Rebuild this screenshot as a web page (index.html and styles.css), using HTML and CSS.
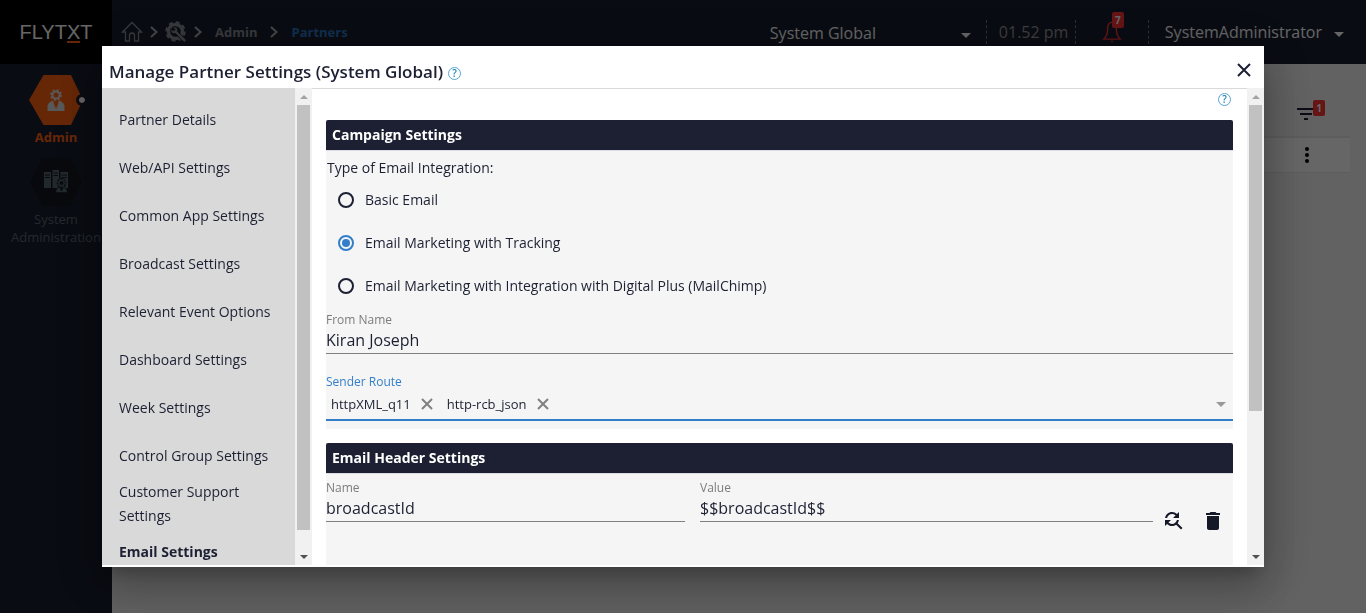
FILE: index.html
```html
<!DOCTYPE html>
<html lang="en">
<head>
<meta charset="utf-8">
<title>Manage Partner Settings</title>
<link rel="stylesheet" href="styles.css">
</head>
<body>
<div class="app">
  <header class="topbar">
    <a class="logo" href="#">FLYT<span class="logo-mark">X</span>T</a>
    <nav class="crumbs" aria-label="Breadcrumb">
      <a href="#" aria-label="Home"><svg class="home" viewBox="0 0 22 22"><path d="M4.500 11H1.500L11 1.500 20.500 11H17.500V20H13.500V14.500A2.500 2.500 0 0 0 8.500 14.500V20H4.500V11Z" fill="none" stroke="currentColor" stroke-width="1.300"/></svg></a>
      <svg class="chev" viewBox="0 0 8 12"><path d="M1 1 6.500 6 1 11" /></svg>
      <a href="#" aria-label="Settings"><svg class="cog" viewBox="0 0 22 22"><circle cx="10.500" cy="10.500" r="7" fill="none" stroke="currentColor" stroke-width="3.400"/><circle cx="10.500" cy="10.500" r="9.200" fill="none" stroke="currentColor" stroke-width="2" stroke-dasharray="4 3.225"/><path d="M7.500 6 10 8.500 8.500 10 6 7.500C5 11 7.500 13.500 10.500 12.500L17.500 20Q19.500 22 21 20.500 22 19 20 17.500L12.500 10.500C13.500 7.500 11 5 7.500 6Z" fill="currentColor" stroke="#191e30" stroke-width="1"/></svg></a>
      <svg class="chev" viewBox="0 0 8 12"><path d="M1 1 6.500 6 1 11" /></svg>
      <a class="crumb" href="#">Admin</a>
      <svg class="chev" viewBox="0 0 8 12"><path d="M1 1 6.500 6 1 11" /></svg>
      <a class="crumb current" href="#">Partners</a>
    </nav>
    <div class="tools">
      <button class="picker scope">System Global<span class="caret"></span></button>
      <time class="clock">01.52 pm</time>
      <button class="alerts" aria-label="Notifications"><svg viewBox="0 0 18 20"><path d="M9 1C5 1.500 5 5 5 8 5 12 3.500 14.500 1.500 16.500H16.500C14.500 14.500 13 12 13 8 13 5 13 1.500 9 1Z" fill="none" stroke="currentColor" stroke-width="1.300"/><path d="M7.500 18H10.500L9 19.500Z" fill="currentColor"/></svg><span class="badge">7</span></button>
      <button class="picker user">SystemAdministrator<span class="caret"></span></button>
    </div>
  </header>
  <div class="workspace">
    <nav class="rail" aria-label="Modules">
      <a class="module active" href="#"><span class="hex"><svg viewBox="0 0 54 50"><path d="M14.500 0H42L54 25 42 50H14.500L0 25Z" fill="#ff6210"/><g fill="#ddd"><circle cx="27" cy="20" r="3.600" fill="none" stroke="#ddd" stroke-width="2"/><circle cx="27" cy="20" r="5" fill="none" stroke="#ddd" stroke-width="1.800" stroke-dasharray="2 1.930"/><path d="M18.500 36V31Q19 27 24 25.500L26.500 34 27 30 27.500 34 30 25.500Q35 27 35.500 31V36Z"/></g></svg></span>Admin</a>
      <a class="module" href="#"><span class="hex"><svg viewBox="0 0 54 50"><path d="M13 1H41L53 25 41 49H13L1 25Z" fill="#16181f"/><g fill="#546870"><path d="M15 15H22V31H15ZM23.500 13H30V31H23.500ZM31.500 15H39V31H31.500Z"/><path d="M16 18H21M16 20.500H21M24.500 16H29M24.500 18.500H29M32.500 18H38M32.500 20.500H38" stroke="#16181f"/><circle cx="32.500" cy="26" r="4.800" fill="#16181f"/><circle cx="32.500" cy="26" r="2.700" fill="none" stroke="#546870" stroke-width="1.200"/><circle cx="32.500" cy="26" r="3.800" fill="none" stroke="#546870" stroke-width="1.200" stroke-dasharray="1.500 1.480"/><path d="M27 35.500V33Q27.500 31 30.500 30L32.500 34 34.500 30Q37.500 31 38 33V35.500Z" stroke="#16181f" stroke-width=".6"/></g></svg></span>System Administration</a>
    </nav>
    <main class="page">
      <button class="filter" aria-label="Filters"><svg viewBox="0 0 18 12"><path d="M0 1H18M3 6H15M7 11H11" stroke="currentColor" stroke-width="2"/></svg><span class="badge">1</span></button>
      <div class="record"><button class="more" aria-label="More"><svg viewBox="0 0 4 16"><circle cx="2" cy="2" r="2"/><circle cx="2" cy="8" r="2"/><circle cx="2" cy="14" r="2"/></svg></button></div>
    </main>
  </div>
</div>
<div class="backdrop">
  <section class="dialog" role="dialog" aria-modal="true" aria-labelledby="dialog-title">
    <header class="dialog-head">
      <h1 id="dialog-title">Manage Partner Settings (System Global)</h1>
      <button class="help" aria-label="Help">?</button>
      <button class="close" aria-label="Close"><svg viewBox="0 0 14 14"><path d="M1 1 13 13M13 1 1 13" stroke="currentColor" stroke-width="2"/></svg></button>
    </header>
    <div class="dialog-body">
      <nav class="menu" aria-label="Partner settings">
        <a href="#">Partner Details</a>
        <a href="#">Web/API Settings</a>
        <a href="#">Common App Settings</a>
        <a href="#">Broadcast Settings</a>
        <a href="#">Relevant Event Options</a>
        <a href="#">Dashboard Settings</a>
        <a href="#">Week Settings</a>
        <a href="#">Control Group Settings</a>
        <a href="#">Customer Support Settings</a>
        <a href="#" class="selected">Email Settings</a>
      </nav>
      <div class="scrollbar menu-scroll" aria-hidden="true"><span class="arrow up"></span><span class="track"><span class="thumb"></span></span><span class="arrow down"></span></div>
      <form class="content">
        <div class="content-help"><button type="button" class="help" aria-label="Help">?</button></div>
        <section class="panel">
          <h2>Campaign Settings</h2>
          <fieldset class="options">
            <legend>Type of Email Integration:</legend>
            <label><input type="radio" name="integration">Basic Email</label>
            <label><input type="radio" name="integration" checked>Email Marketing with Tracking</label>
            <label><input type="radio" name="integration">Email Marketing with Integration with Digital Plus (MailChimp)</label>
          </fieldset>
          <div class="field sender">
            <label for="from-name">From Name</label>
            <input id="from-name" type="text" value="Kiran Joseph">
          </div>
          <div class="field route" role="group" aria-labelledby="route-label">
            <span class="label" id="route-label">Sender Route</span>
            <div class="chips">
              <span class="chip">httpXML_q11<button type="button" aria-label="Remove httpXML_q11"><svg viewBox="0 0 12 12"><path d="M1 1 11 11M11 1 1 11"/></svg></button></span>
              <span class="chip">http-rcb_json<button type="button" aria-label="Remove http-rcb_json"><svg viewBox="0 0 12 12"><path d="M1 1 11 11M11 1 1 11"/></svg></button></span>
              <button type="button" class="open" aria-label="Show routes"><span class="caret"></span></button>
            </div>
          </div>
        </section>
        <section class="panel headers">
          <h2>Email Header Settings</h2>
          <div class="header-row">
            <div class="field">
              <label for="header-name">Name</label>
              <input id="header-name" type="text" value="broadcastId">
            </div>
            <div class="field">
              <label for="header-value">Value</label>
              <input id="header-value" type="text" value="$$broadcastId$$">
            </div>
            <div class="actions">
              <button type="button" aria-label="Find and replace"><svg viewBox="2 3 20 20"><path d="M11 6c1.380 0 2.630.56 3.540 1.460L12 10h6V4l-2.050 2.050C14.680 4.780 12.930 4 11 4c-3.530 0-6.430 2.610-6.920 6H6.100c.46-2.280 2.480-4 4.900-4zm5.640 9.140c.66-.9 1.120-1.970 1.280-3.140H15.900c-.46 2.280-2.480 4-4.900 4-1.380 0-2.630-.56-3.540-1.460L10 12H4v6l2.050-2.050C7.320 17.220 9.070 18 11 18c1.550 0 2.980-.51 4.140-1.360L20 21.490 21.490 20l-4.850-4.860z"/></svg></button>
              <button type="button" aria-label="Delete"><svg viewBox="2 2 20 20"><path d="M6 19c0 1.100.9 2 2 2h8c1.100 0 2-.9 2-2V7H6v12zM19 4h-3.500l-1-1h-5l-1 1H5v2h14V4z"/></svg></button>
            </div>
          </div>
        </section>
      </form>
      <div class="scrollbar content-scroll" aria-hidden="true"><span class="arrow up"></span><span class="track"><span class="thumb"></span></span><span class="arrow down"></span></div>
    </div>
  </section>
</div>
</body>
</html>
```
FILE: styles.css
```css
* { box-sizing: border-box; }
body { margin: 0; font: 14px/24px "Open Sans", sans-serif; color: #1c2032; overflow: hidden; }
button, input { font: inherit; color: inherit; }
button { background: none; border: 0; padding: 0; }
a { color: inherit; text-decoration: none; }
svg { display: block; }

.app { min-height: 100vh; display: flex; flex-direction: column; }
.topbar { display: flex; height: 64px; background: #191e30; color: #fff; }
.logo { width: 112px; background: #000; text-align: center; font: 20px/64px "Liberation Sans", sans-serif; }
.logo-mark { display: inline-block; line-height: 18px; border-bottom: 2px solid #ff6210; }
.crumbs { display: flex; align-items: center; gap: 7px; padding-left: 9px; color: #8a8f98; font-size: 13px; font-weight: 700; }
.home { width: 22px; height: 22px; }
.cog { width: 22px; height: 22px; }
.chev { width: 8px; height: 12px; fill: none; stroke: #b0b0b0; stroke-width: 2; }
.crumb { margin: 0 6px; }
.crumb.current { color: #2a76c2; }
.tools { flex: 1; display: flex; justify-content: flex-end; align-items: center; font-size: 16px; }
.picker { display: flex; justify-content: space-between; align-items: center; }
.caret { border: 5px solid transparent; border-top-color: currentColor; border-bottom-width: 0; }
.picker .caret { margin-top: 4px; }
.scope { width: 201px; margin-right: 15px; padding-top: 2px; }
.clock { width: 90px; padding-left: 12px; color: #999; border: dashed #777; border-width: 0 1px; }
.alerts { position: relative; width: 72px; color: #f33; display: flex; justify-content: center; }
.alerts svg { width: 20px; height: 22px; }
.badge { position: absolute; background: #f33; color: #fff; font: 700 10px/16px "Open Sans", sans-serif; width: 12px; text-align: center; border-radius: 2px; }
.alerts .badge { top: -9px; right: 24px; }
.user { gap: 12px; padding: 0 22px 0 16px; border-left: 1px dashed #777; }

.workspace { flex: 1; display: flex; }
.rail { width: 112px; background: #191e30; padding-top: 11px; display: flex; flex-direction: column; gap: 11px; }
.module { display: block; text-align: center; font-size: 13px; line-height: 18px; color: #5c6870; }
.module.active { color: #ff6210; font-weight: 700; }
.hex { position: relative; display: block; width: 54px; margin: 0 auto 3px; }
.hex svg { width: 54px; height: 50px; }
.active .hex::after { content: ""; position: absolute; right: -5px; top: 19px; width: 6px; height: 6px; border: 3px solid #191e30; border-radius: 50%; background: #fff padding-box; }
.page { flex: 1; background: #f5f5f5; padding: 44px 16px; display: flex; flex-direction: column; align-items: stretch; }
.filter { position: relative; align-self: flex-end; margin-right: 35px; height: 12px; }
.filter svg { width: 18px; height: 12px; }
.filter .badge { top: -8px; right: -10px; }
.record { margin-top: 16px; height: 37px; background: #fff; border: solid #e8e8e8; border-width: 2px 0 1px; display: flex; justify-content: flex-end; align-items: center; padding-right: 41px; }
.more svg { width: 4px; height: 16px; }

.backdrop { position: fixed; inset: 0; background: rgba(0, 0, 0, .6); padding: 46px 102px; }
.dialog { height: 100%; display: flex; flex-direction: column; background: #fff; box-shadow: 0 11px 15px -7px rgba(0, 0, 0, .2), 0 24px 38px 3px rgba(0, 0, 0, .14), 0 9px 46px 8px rgba(0, 0, 0, .22); padding-bottom: 2px; }
.dialog-head { height: 42px; flex: none; display: flex; align-items: center; padding: 10px 13px 0 7px; }
h1 { margin: 0; font-size: 17px; font-weight: 600; }
.help { width: 13px; height: 13px; border: 1px solid #5aa5cf; border-radius: 50%; color: #1f7fb5; font-size: 10px; font-weight: 600; line-height: 11px; }
.dialog-head .help { margin: 2px 0 0 5px; }
.close { margin: 0 0 4px auto; }
.close svg { width: 14px; height: 14px; }
.dialog-body { flex: 1; min-height: 0; display: flex; }
.menu { width: 193px; background: #d9d9d9; padding-top: 8px; overflow: hidden; }
.menu a { display: flex; align-items: center; min-height: 48px; padding: 0 16px 0 17px; }
.menu .selected { font-weight: 700; }
.scrollbar { width: 17px; background: #f1f1f1; display: flex; flex-direction: column; align-items: center; }
.arrow { height: 17px; display: flex; align-items: center; }
.arrow::after { content: ""; border: 4px solid transparent; }
.up::after { border-bottom-color: #a3a3a3; border-top-width: 0; }
.down::after { border-top-color: #505050; border-bottom-width: 0; }
.track { flex: 1; width: 13px; }
.thumb { display: block; background: #c1c1c1; }
.menu-scroll .thumb { height: 96%; }
.content-scroll .thumb { height: 69%; }
.content { flex: 1; min-width: 0; border-top: 1px solid #d9d9d9; padding: 0 14px; overflow: hidden; }
.content-help { height: 31px; display: flex; justify-content: flex-end; padding: 4px 2px 0; }
.panel { background: #f5f5f5; margin-bottom: 14px; padding-bottom: 8px; }
h2 { margin: 0; height: 31px; padding-left: 6px; background: #1c2032; color: #fff; border-bottom: 1px solid #dcdce4; border-radius: 2px 2px 0 0; font-size: 14px; line-height: 30px; font-weight: 700; }
.options { border: 0; margin: 0; padding: 0; }
.options legend { padding: 5px 1px 0; }
.options label { display: flex; align-items: center; height: 43px; padding-left: 12px; gap: 11px; }
.options label:first-of-type { margin-top: -2px; }
input[type="radio"] { appearance: none; margin: 0; width: 16px; height: 16px; border: 2px solid #1c2032; border-radius: 50%; padding: 2px; background-clip: content-box; }
input[type="radio"]:checked { border-color: #337ec9; background-color: #337ec9; }
.field { display: flex; flex-direction: column; }
.field label, .field .label { font-size: 12px; line-height: 17px; color: #7c7c7c; }
.field input { border: 0; border-bottom: 1px solid #808080; background: none; padding: 0 0 2px; height: 26px; width: 100%; font-size: 16px; outline: 0; }
.sender { margin-top: 4px; }
.route { margin-top: 19px; }
.field .label { color: #337ec9; }
.chips { display: flex; align-items: center; height: 31px; padding-bottom: 1px; border-bottom: 2px solid #337ec9; font-size: 13px; gap: 5px; }
.chip { display: flex; align-items: center; gap: 10px; padding: 0 4px 0 5px; }
.chip svg { width: 12px; height: 12px; stroke: #808080; stroke-width: 2; }
.open { margin-left: auto; padding-right: 7px; color: #999; }
.open .caret { display: block; }
.headers { height: 300px; }
.header-row { display: grid; grid-template-columns: 359fr 453fr 65px; column-gap: 15px; padding-top: 5px; }
.actions { display: flex; gap: 20px; align-items: flex-start; margin-left: -5px; padding-top: 32px; }
.actions svg { width: 20px; height: 20px; fill: #141827; }
```
